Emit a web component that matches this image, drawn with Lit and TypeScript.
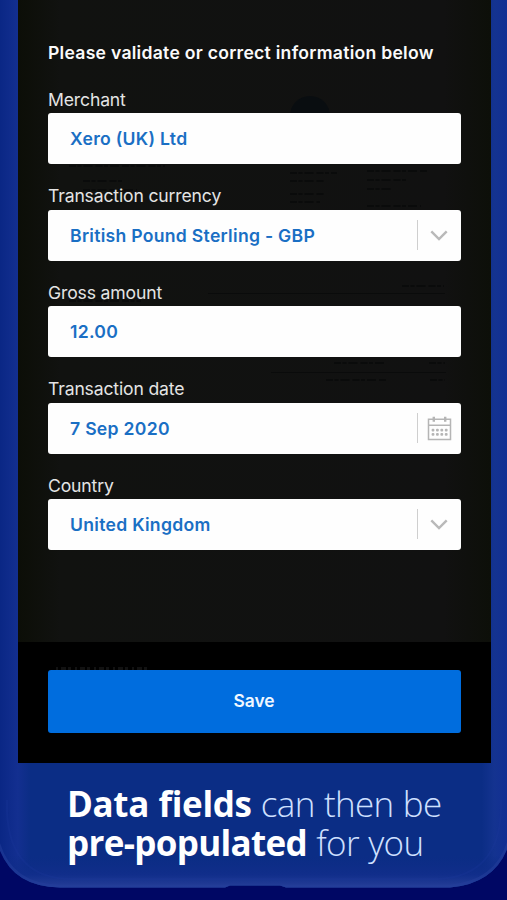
import { LitElement, html, css, svg } from "lit";
import { customElement, property } from "lit/decorators.js";

type Kind = "text" | "select" | "date";

@customElement("form-field")
class FormField extends LitElement {
  @property() label = "";
  @property() value = "";
  @property() kind: Kind = "text";

  static styles = css`
    :host { display: block; height: 72.4px; margin-bottom: 24px; }
    .label { height: 21.4px; line-height: 16.6px; font-size: 17.6px; letter-spacing: -0.16px; color: #e4e4e4; white-space: nowrap; }
    .box { display: flex; align-items: center; height: 51px; background: #fefefe; border-radius: 3px; padding-left: 22px; box-sizing: border-box; }
    .value { flex: 1; font-size: 17.6px; font-weight: 600; letter-spacing: 0.28px; color: #1a6fc4; white-space: nowrap; }
    .side { display: flex; align-items: center; justify-content: center; width: 43px; height: 30px; border-left: 1px solid #cfcfcf; }
    svg { display: block; margin-right: 1px; }
  `;

  icon() {
    if (this.kind === "select")
      return html`<svg width="18" height="12" viewBox="0 0 18 12" fill="none" stroke="#b9b9b9" stroke-width="2.4"><path d="M1.3 2.3 9 10 16.7 2.3" /></svg>`;
    const dots = [4.6, 9, 13.4, 17.8].flatMap((x) => [12.7, 17].map((y) => svg`<rect x=${x} y=${y} width="2.8" height="2.7" rx="1" />`));
    return html`<svg width="25" height="25" viewBox="0 0 25 25" fill="#b5b5b5">
      <path d="M1.5 3.2h22v20.3h-22zM1.5 9.2h22" fill="none" stroke="#b5b5b5" stroke-width="1.5" />
      <path d="M6.8 .8v5M18.2 .8v5" stroke="#b5b5b5" stroke-width="2.4" />
      ${dots}
    </svg>`;
  }

  render() {
    return html`<div class="label">${this.label}</div>
      <div class="box">
        <span class="value">${this.value}</span>
        ${this.kind === "text" ? "" : html`<span class="side">${this.icon()}</span>`}
      </div>`;
  }
}

@customElement("app-root")
class AppRoot extends LitElement {
  static styles = css`
    :host { display: block; width: 507px; height: 900px; overflow: hidden; position: relative; background: #000764; font-family: Inter, "Liberation Sans", sans-serif; }
    .frame { position: absolute; left: 0; top: 0; display: block; }
    .page { position: relative; display: flex; flex-direction: column; height: 900px; }
    .screen { position: relative; width: 473px; height: 763px; margin-left: 18px; background: linear-gradient(90deg, #0c0e07, #111210 9%, #111 90%, #0d0f09); display: flex; flex-direction: column; }
    .ghost { position: absolute; left: 0; top: 0; }
    .form { position: relative; flex: 1; padding: 42px 30px 0; }
    .title { height: 50px; line-height: 22px; font-size: 17.6px; font-weight: 600; letter-spacing: 0.26px; color: #fafafa; white-space: nowrap; }
    .footer { position: relative; height: 121px; box-sizing: border-box; padding: 28px 30px 0; background: #000; }
    .save { display: block; width: 100%; height: 63px; border: 0; border-radius: 3px; padding: 0 1px 2px 0; background: #006dde; color: #f1f8ff; font: 600 17.4px Inter, "Liberation Sans", sans-serif; }
    .caption { margin: 21px 0 0 67px; font-family: "Open Sans", "Noto Sans", sans-serif; font-size: 35px; line-height: 39px; font-weight: 300; letter-spacing: -0.65px; color: #cfe0ff; white-space: nowrap; }
    .line { height: 39px; word-spacing: 0.8px; }
    b { font-weight: 700; letter-spacing: -0.35px; color: #fff; }
    .tight b { letter-spacing: -0.68px; }
  `;

  render() {
    return html`
      <svg class="frame" width="507" height="900" viewBox="0 0 507 900">
        <defs>
          <linearGradient id="side" x1="0" x2="1">
            <stop offset="0" stop-color="#0a2785" /><stop offset=".035" stop-color="#132f90" />
            <stop offset=".06" stop-color="#0b2d85" /><stop offset=".95" stop-color="#0b2d85" />
            <stop offset=".975" stop-color="#143390" /><stop offset="1" stop-color="#122f93" />
          </linearGradient>
          <linearGradient id="foot" x1="0" x2="0" y1="0" y2="1">
            <stop offset="0" stop-color="#0d2b86" stop-opacity="0" /><stop offset=".6" stop-color="#112e8b" /><stop offset="1" stop-color="#263f98" />
          </linearGradient>
          <clipPath id="body"><path d="M-7 -10V808Q-7 887 60 887.5H225L230 885.5H280L286 887.5H450Q514 882 514 808V-10Z" /></clipPath>
        </defs>
        <g clip-path="url(#body)">
          <rect width="507" height="900" fill="url(#side)" />
          <rect y="855" width="507" height="33" fill="url(#foot)" />
          <path d="M-7 808Q-7 887 60 887H450Q514 882 514 808" fill="none" stroke="#243e9a" stroke-width="5" opacity=".55" />
          <path d="M7 800V812Q10 879 72 879H438Q500 876 501 808V800" fill="none" stroke="#1b389a" stroke-width="2" opacity=".25" />
        </g>
      </svg>
      <div class="page">
        <div class="screen">
          <svg class="ghost" width="473" height="763" viewBox="0 0 473 763" fill="none" stroke="#0a0b0b" stroke-width="2">
            <circle cx="292" cy="116" r="20" fill="#090d10" stroke="none" />
            <g stroke-dasharray="7 1.5 4 2 9 3">
              <path d="M51 166h96M65 181h40M65 190h54M272 173h47M272 181h34M272 194h34M272 202h30M349 171h60M349 180h39M349 189h26M349 206h54M384 286h42M51 301h72M316 363h52M411 363h16M308 380h60M412 380h15" />
            </g>
            <path d="M190 293.500h237M253 372.500h175" stroke-width="1" />
          </svg>
          <div class="form">
            <div class="title">Please validate or correct information below</div>
            <form-field label="Merchant" value="Xero (UK) Ltd"></form-field>
            <form-field label="Transaction currency" value="British Pound Sterling - GBP" kind="select"></form-field>
            <form-field label="Gross amount" value="12.00"></form-field>
            <form-field label="Transaction date" value="7 Sep 2020" kind="date"></form-field>
            <form-field label="Country" value="United Kingdom" kind="select"></form-field>
          </div>
          <div class="footer">
            <svg class="ghost" width="473" height="28" viewBox="0 0 473 28" stroke="#121212" stroke-width="3" stroke-dasharray="2 3 5 2 3 4">
              <path d="M38 26.500h92" />
            </svg>
            <button class="save">Save</button>
          </div>
        </div>
        <div class="caption">
          <div class="line"><b>Data fields</b> can then be</div>
          <div class="line tight"><b>pre-populated</b> for you</div>
        </div>
      </div>`;
  }
}
